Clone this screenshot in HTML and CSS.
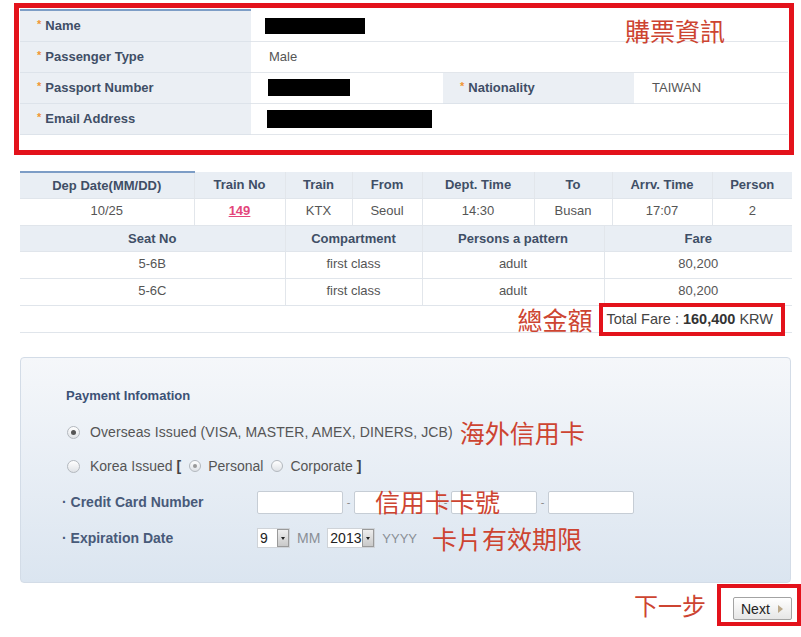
FILE: index.html
```html
<!DOCTYPE html>
<html lang="en">
<head>
    <meta charset="UTF-8">
    <meta name="viewport" content="width=device-width, initial-scale=1.0">
    <title>Ticket Reservation - Payment</title>
    <link rel="stylesheet" href="styles.css">
</head>
<body>
    <div class="page">
        <!-- passenger info -->
        <div class="info-box">
            <table class="info">
                <colgroup>
                    <col class="c1"><col class="c2"><col class="c3"><col class="c4">
                </colgroup>
                <tr>
                    <th class="first"><span class="req">*</span>Name</th>
                    <td colspan="3"><span class="mask mask-name"></span></td>
                </tr>
                <tr>
                    <th><span class="req">*</span>Passenger Type</th>
                    <td colspan="3">Male</td>
                </tr>
                <tr>
                    <th><span class="req">*</span>Passport Number</th>
                    <td><span class="mask mask-passport"></span></td>
                    <th><span class="req">*</span>Nationality</th>
                    <td>TAIWAN</td>
                </tr>
                <tr>
                    <th><span class="req">*</span>Email Address</th>
                    <td colspan="3"><span class="mask mask-email"></span></td>
                </tr>
            </table>
            <span class="note note-info">購票資訊</span>
        </div>

        <!-- trip -->
        <table class="trip trip-top">
            <colgroup>
                <col style="width:174px"><col style="width:91px"><col style="width:67px"><col style="width:70px">
                <col style="width:112px"><col style="width:78px"><col style="width:100px"><col style="width:80px">
            </colgroup>
            <tr class="head">
                <th class="first">Dep Date(MM/DD)</th>
                <th>Train No</th>
                <th>Train</th>
                <th>From</th>
                <th>Dept. Time</th>
                <th>To</th>
                <th>Arrv. Time</th>
                <th>Person</th>
            </tr>
            <tr>
                <td>10/25</td>
                <td><a class="train-no" href="#">149</a></td>
                <td>KTX</td>
                <td>Seoul</td>
                <td>14:30</td>
                <td>Busan</td>
                <td>17:07</td>
                <td>2</td>
            </tr>
        </table>
        <table class="trip">
            <colgroup>
                <col style="width:265px"><col style="width:137px"><col style="width:182px"><col style="width:188px">
            </colgroup>
            <tr class="head">
                <th>Seat No</th>
                <th>Compartment</th>
                <th>Persons a pattern</th>
                <th>Fare</th>
            </tr>
            <tr>
                <td>5-6B</td>
                <td>first class</td>
                <td>adult</td>
                <td>80,200</td>
            </tr>
            <tr>
                <td>5-6C</td>
                <td>first class</td>
                <td>adult</td>
                <td>80,200</td>
            </tr>
        </table>
        <div class="total-row">
            <span class="note note-total">總金額</span>
            <div class="total-box">Total Fare : <b>160,400</b>&nbsp;KRW</div>
        </div>

        <!-- payment -->
        <div class="payment">
            <h3>Payment Infomation</h3>
            <div class="opt">
                <span class="radio on"></span><span class="opt-text">Overseas Issued (VISA, MASTER, AMEX, DINERS, JCB)</span>
                <span class="note note-overseas">海外信用卡</span>
            </div>
            <div class="opt">
                <span class="radio"></span>Korea Issued <b class="br">[</b>
                <span class="radio sm on"></span>Personal
                <span class="radio sm"></span>Corporate <b class="br">]</b>
            </div>
            <div class="field">
                <label>· Credit Card Number</label>
                <div class="card-inputs">
                    <input type="text"><span class="dash">-</span>
                    <input type="text"><span class="dash">-</span>
                    <input type="text"><span class="dash">-</span>
                    <input type="text">
                </div>
                <span class="note note-card">信用卡卡號</span>
            </div>
            <div class="field">
                <label>· Expiration Date</label>
                <span class="sel sel-mm"><span class="val">9</span><span class="arrow"></span></span>
                <span class="unit">MM</span>
                <span class="sel sel-yy"><span class="val">2013</span><span class="arrow"></span></span>
                <span class="unit unit-yy">YYYY</span>
                <span class="note note-exp">卡片有效期限</span>
            </div>
        </div>

        <div class="next-row">
            <span class="note note-next">下一步</span>
            <div class="next-box">
                <button class="next-btn">Next</button>
            </div>
        </div>
    </div>
</body>
</html>
```

FILE: styles.css
```css
body {
    margin: 0;
    font-family: "Liberation Sans", Arial, sans-serif;
    background: #fff;
    color: #555;
}
.page {
    width: 801px;
}
.note {
    font-family: "Noto Sans CJK TC", sans-serif;
    color: #cd4431;
    line-height: 1;
    white-space: nowrap;
}

/* passenger info */
.info-box {
    position: relative;
    margin: 3px 0 0 14px;
    width: 770px;
    height: 142px;
    border: 5px solid #e3121b;
}
.info {
    margin: 1px 0 0 1px;
    width: 768px;
    border-collapse: collapse;
    table-layout: fixed;
}
.info .c1 { width: 231px; }
.info .c2 { width: 192px; }
.info .c3 { width: 191px; }
.info .c4 { width: 154px; }
.info tr {
    height: 31px;
}
.info th {
    background: #ebeff4;
    text-align: left;
    font-size: 13px;
    font-weight: bold;
    color: #3f4e66;
    padding: 0 0 0 17px;
    border-bottom: 1px solid #dde3ea;
}
.info th.first {
    border-top: 2px solid #7d9dc6;
}
.info td {
    font-size: 13px;
    color: #555;
    padding: 0 0 0 18px;
    border-bottom: 1px solid #e2e6eb;
}
.req {
    color: #f19531;
    font-size: 11px;
    margin-right: 4px;
    position: relative;
    top: -2px;
}
.mask {
    display: inline-block;
    background: #000;
    vertical-align: middle;
}
.mask-name { width: 100px; height: 16px; margin-left: -4px; }
.mask-passport { width: 82px; height: 17px; margin-left: -1px; }
.mask-email { width: 165px; height: 18px; margin-left: -2px; }
.note-info {
    position: absolute;
    top: 10px;
    right: 64px;
    font-size: 25px;
}

/* trip table */
.trip {
    margin-left: 20px;
    width: 772px;
    border-collapse: collapse;
    table-layout: fixed;
}
.trip-top {
    margin-top: 16px;
}
.trip tr {
    height: 27px;
}
.trip tr.head {
    height: 26px;
}
.trip th, .trip td {
    text-align: center;
    font-size: 13px;
    padding: 0;
    border-bottom: 1px solid #e0e5eb;
}
.trip td {
    padding-bottom: 3px;
}
.trip th + th, .trip td + td {
    border-left: 1px solid #e2e6eb;
}
.trip th {
    background: #e9eef4;
    color: #3f4e66;
    font-weight: bold;
}
.trip th.first {
    border-top: 2px solid #7d9dc6;
}
.trip td {
    color: #555;
}
.train-no {
    color: #e3457a;
    font-weight: bold;
}
.total-row {
    margin-left: 20px;
    width: 765px;
    height: 26px;
    padding-right: 7px;
    border-bottom: 1px solid #e0e5eb;
    display: flex;
    justify-content: flex-end;
    align-items: center;
}
.note-total {
    font-size: 25px;
    margin-right: 7px;
}
.total-box {
    display: flex;
    align-items: center;
    height: 25px;
    padding: 0 8px 0 3px;
    border: 4px solid #e3121b;
    font-size: 14.5px;
    color: #444;
}
.total-box b {
    color: #333;
    margin-left: 4px;
}

/* payment */
.payment {
    margin: 24px 0 0 20px;
    width: 724px;
    padding: 28px 0 27px 45px;
    border: 1px solid #d3dce7;
    border-radius: 4px;
    background: linear-gradient(#f5f7fa, #dbe5f0);
}
.payment h3 {
    margin: 0 0 9px;
    height: 20px;
    line-height: 20px;
    font-size: 13px;
    color: #3c5276;
}
.opt {
    height: 34px;
    display: flex;
    align-items: center;
    font-size: 14px;
    color: #555;
}
.opt-text {
    letter-spacing: 0.1px;
}
.radio {
    display: inline-block;
    width: 11px;
    height: 11px;
    border: 1px solid #b3b8be;
    border-radius: 50%;
    background: linear-gradient(#fff, #dfe2e6);
    margin: 0 10px 0 1px;
    position: relative;
}
.radio.on::after {
    content: "";
    position: absolute;
    left: 3px;
    top: 3px;
    width: 5px;
    height: 5px;
    border-radius: 50%;
    background: #555;
}
.radio.sm {
    width: 10px;
    height: 10px;
    margin: 0 7px 0 8px;
}
.radio.sm.on::after {
    left: 3px;
    top: 3px;
    width: 4px;
    height: 4px;
    background: #999;
}
.br {
    color: #444;
    margin-left: 4px;
}
.note-overseas {
    font-size: 25px;
    margin-left: 7px;
}
.field {
    position: relative;
    height: 34px;
    margin-top: 2px;
    display: flex;
    align-items: center;
}
.field label {
    width: 195px;
    margin-left: -4px;
    font-size: 14px;
    font-weight: bold;
    color: #485a79;
}
.card-inputs {
    display: flex;
    align-items: center;
}
.card-inputs input {
    width: 86px;
    height: 23px;
    box-sizing: border-box;
    border: 1px solid #c6cdd5;
    border-radius: 2px;
    background: #fff;
    padding: 0;
    margin: 0;
}
.dash {
    width: 11px;
    text-align: center;
    font-size: 11px;
    color: #888;
}
.note-card {
    position: absolute;
    left: 309px;
    top: 4px;
    font-size: 25px;
}
.sel {
    display: inline-flex;
    align-items: center;
    height: 20px;
    box-sizing: border-box;
    border: 1px solid #cfd3d8;
    background: #fff;
    font-size: 14px;
    color: #222;
}
.sel-mm { width: 33px; }
.sel-yy { width: 48px; margin-left: 7px; }
.sel .val {
    flex: 1;
    padding-left: 2px;
}
.sel .arrow {
    position: relative;
    width: 10px;
    height: 16px;
    border: 1px solid #9a9a9a;
    background: linear-gradient(#eee, #c9c9c9);
}
.sel .arrow::after {
    content: "";
    position: absolute;
    left: 3px;
    top: 7px;
    border-left: 2px solid transparent;
    border-right: 2px solid transparent;
    border-top: 3px solid #222;
}
.unit {
    font-size: 14px;
    color: #8a8f96;
    margin-left: 7px;
}
.unit-yy {
    font-size: 13px;
}
.note-exp {
    font-size: 25px;
    margin-left: 15px;
}

/* next */
.next-row {
    margin-top: 1px;
    display: flex;
    justify-content: flex-end;
    align-items: center;
}
.note-next {
    font-size: 24px;
    margin-right: 11px;
}
.next-box {
    width: 76px;
    height: 25px;
    border: 4px solid #e3121b;
    display: flex;
    align-items: flex-start;
    padding-top: 9px;
}
.next-btn {
    margin-left: 12px;
    width: 59px;
    height: 23px;
    display: flex;
    align-items: center;
    gap: 8px;
    padding: 0 0 0 7px;
    border: 1px solid #a3a3a3;
    border-radius: 2px;
    background: linear-gradient(#fff, #e6e6e6);
    font-family: "Liberation Sans", Arial, sans-serif;
    font-size: 14px;
    color: #222;
}
.next-btn::after {
    content: "";
    border-left: 5px solid #bba98a;
    border-top: 4px solid transparent;
    border-bottom: 4px solid transparent;
}
```
